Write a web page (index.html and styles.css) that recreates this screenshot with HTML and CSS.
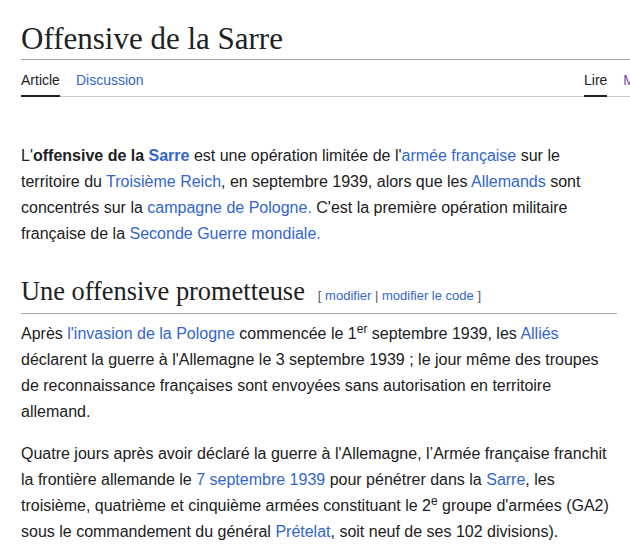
FILE: index.html
```html
<!DOCTYPE html>
<html lang="fr">
<head>
<meta charset="utf-8">
<title>Offensive de la Sarre</title>
<link rel="stylesheet" href="styles.css">
</head>
<body>
<div class="page">
  <header class="page-header">
    <h1 class="title">Offensive de la Sarre</h1>
    <div class="tabs">
      <nav class="tab-group">
        <a class="tab active">Article</a>
        <a class="tab link">Discussion</a>
      </nav>
      <nav class="tab-group">
        <a class="tab active">Lire</a>
        <a class="tab link visited">Modifier</a>
      </nav>
    </div>
  </header>
  <main class="content">
    <p>L'<b>offensive de la <a class="link">Sarre</a></b> est une opération limitée de l'<a class="link">armée française</a> sur le territoire du <a class="link">Troisième Reich</a>, en septembre 1939, alors que les <a class="link">Allemands</a> sont concentrés sur la <a class="link">campagne de Pologne.</a> C'est la première opération militaire française de la <a class="link">Seconde Guerre mondiale.</a></p>
    <h2 class="section-heading">Une offensive prometteuse<span class="editsection"><span class="bracket">[</span> <a class="link">modifier</a> <span class="bracket">|</span> <a class="link">modifier le code</a> <span class="bracket">]</span></span></h2>
    <p>Après <a class="link">l'invasion de la Pologne</a> commencée le 1<sup>er</sup> septembre 1939, les <a class="link">Alliés</a> déclarent la guerre à l'Allemagne le 3 septembre 1939 ; le jour même des troupes de reconnaissance françaises sont envoyées sans autorisation en territoire allemand.</p>
    <p>Quatre jours après avoir déclaré la guerre à l'Allemagne, l’Armée française franchit la frontière allemande le <a class="link">7 septembre 1939</a> pour pénétrer dans la <a class="link">Sarre</a>, les troisième, quatrième et cinquième armées constituant le 2<sup>e</sup> groupe d'armées (GA2) sous le commandement du général <a class="link">Prételat</a>, soit neuf de ses 102 divisions).</p>
  </main>
</div>
</body>
</html>
```

FILE: styles.css
```css
html, body {
  margin: 0;
  padding: 0;
  background: #ffffff;
}

body {
  width: 630px;
  height: 550px;
  overflow: hidden;
  color: #202122;
  font-family: "Liberation Sans", Arial, sans-serif;
}

.page {
  padding-left: 21px;
}

.title {
  margin: 0;
  padding: 20px 0 2px;
  font-family: "Liberation Serif", "Times New Roman", serif;
  font-weight: normal;
  font-size: 31px;
  line-height: 37px;
  color: #202122;
  border-bottom: 1px solid #a2a9b1;
  white-space: nowrap;
}

.tabs {
  display: grid;
  grid-template-columns: 563px auto;
  border-bottom: 1px solid #c8ccd1;
  white-space: nowrap;
}

.tab-group {
  display: flex;
  gap: 16px;
}

.tab {
  display: block;
  margin-bottom: -1px;
  padding: 10px 0 5px;
  font-size: 14px;
  line-height: 20px;
  border-bottom: 2px solid transparent;
  color: #202122;
}

.tab.active {
  border-bottom-color: #202122;
}

.link {
  color: #3366cc;
  text-decoration: none;
}

.tab.visited {
  color: #6b4ba1;
}

.content {
  width: 596px;
  padding-top: 39px;
  font-size: 16px;
  line-height: 26px;
}

.content p {
  margin: 7px 0 16px;
}

.section-heading {
  margin: 28px 0 0;
  padding: 0 0 5px;
  font-family: "Liberation Serif", "Times New Roman", serif;
  font-weight: normal;
  font-size: 26.4px;
  line-height: 33px;
  color: #202122;
  border-bottom: 1px solid #a2a9b1;
}

.editsection {
  margin-left: 13px;
  font-family: "Liberation Sans", Arial, sans-serif;
  font-size: 13px;
  line-height: 1;
}

.bracket {
  color: #54595d;
}

sup {
  font-size: 75%;
  line-height: 1;
  vertical-align: super;
}
```
